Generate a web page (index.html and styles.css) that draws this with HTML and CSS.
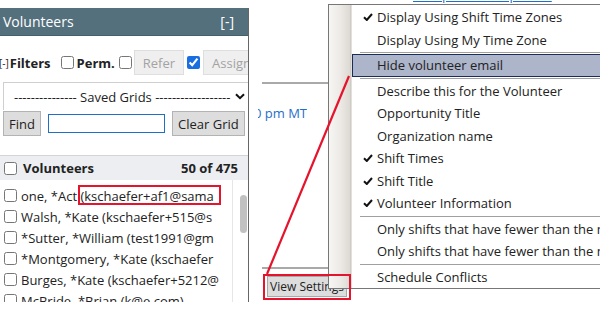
FILE: index.html
```html
<!DOCTYPE html>
<html lang="en">
<head>
  <meta charset="UTF-8">
  <title>Schedule - View Settings</title>
  <link rel="stylesheet" href="styles.css">
</head>
<body>
  <div class="page">
    <section class="panel">
      <div class="panel-head">
        <span>Volunteers</span>
        <span>[-]</span>
      </div>

      <div class="filters">
        <span class="toggle">[-]</span>Filters
        <input type="checkbox" class="check gap-l">
        <span class="perm">Perm.</span>
        <input type="checkbox" class="check">
        <button class="btn-off">Refer</button>
        <input type="checkbox" class="check" checked>
        <button class="btn-off assign">Assign</button>
      </div>

      <div class="saved-grids">
        <span>--------------- Saved Grids ------------------</span>
        <svg class="chevron" width="10" height="7" viewBox="0 0 10 7">
          <path d="M1 1.2 L5 5.2 L9 1.2" fill="none" stroke="#111" stroke-width="2"/>
        </svg>
      </div>

      <div class="find-row">
        <button class="btn">Find</button>
        <input type="text" class="find-input">
        <button class="btn clear">Clear Grid</button>
      </div>

      <div class="grid-head">
        <input type="checkbox" class="check">
        <span class="grid-title">Volunteers</span>
        <span class="grid-count">50 of 475</span>
      </div>

      <div class="grid-body">
        <div class="rows">
          <label class="row"><input type="checkbox" class="check">one, *Act (kschaefer+af1@sama</label>
          <label class="row"><input type="checkbox" class="check">Walsh, *Kate (kschaefer+515@s</label>
          <label class="row"><input type="checkbox" class="check">*Sutter, *William (test1991@gm</label>
          <label class="row"><input type="checkbox" class="check">*Montgomery, *Kate (kschaefer</label>
          <label class="row"><input type="checkbox" class="check">Burges, *Kate (kschaefer+5212@</label>
          <label class="row"><input type="checkbox" class="check">McBride, *Brian (k@e.com)</label>
        </div>
        <div class="scroll">
          <div class="thumb"></div>
        </div>
      </div>
    </section>

    <section class="schedule">
      <a class="shift-link">1:00 pm - 11:00 pm MT</a>
      <div class="rule"></div>
      <div class="time"><span>0 pm MT</span></div>
      <div class="rule rule-low"></div>
      <button class="btn view-btn">View Settings</button>
    </section>
  </div>

  <!-- view settings dropdown -->
  <div class="menu">
    <div class="menu-item"><span class="menu-icon"><svg width="10" height="8" viewBox="0 0 10 8"><path d="M1 4.2 L3.8 7 L9 1" fill="none" stroke="#111" stroke-width="2"/></svg></span>Display Using Shift Time Zones</div>
    <div class="menu-item"><span class="menu-icon"></span>Display Using My Time Zone</div>
    <div class="menu-sep"></div>
    <div class="menu-item active"><span class="menu-icon"></span>Hide volunteer email</div>
    <div class="menu-sep"></div>
    <div class="menu-item"><span class="menu-icon"></span>Describe this for the Volunteer</div>
    <div class="menu-item"><span class="menu-icon"></span>Opportunity Title</div>
    <div class="menu-item"><span class="menu-icon"></span>Organization name</div>
    <div class="menu-item"><span class="menu-icon"><svg width="10" height="8" viewBox="0 0 10 8"><path d="M1 4.2 L3.8 7 L9 1" fill="none" stroke="#111" stroke-width="2"/></svg></span>Shift Times</div>
    <div class="menu-item"><span class="menu-icon"><svg width="10" height="8" viewBox="0 0 10 8"><path d="M1 4.2 L3.8 7 L9 1" fill="none" stroke="#111" stroke-width="2"/></svg></span>Shift Title</div>
    <div class="menu-item"><span class="menu-icon"><svg width="10" height="8" viewBox="0 0 10 8"><path d="M1 4.2 L3.8 7 L9 1" fill="none" stroke="#111" stroke-width="2"/></svg></span>Volunteer Information</div>
    <div class="menu-sep"></div>
    <div class="menu-item"><span class="menu-icon"></span>Only shifts that have fewer than the minimum number of volunteers</div>
    <div class="menu-item"><span class="menu-icon"></span>Only shifts that have fewer than the maximum number of volunteers</div>
    <div class="menu-sep"></div>
    <div class="menu-item"><span class="menu-icon"></span>Schedule Conflicts</div>
  </div>

  <!-- red callouts drawn on top of the screenshot -->
  <svg class="callouts" width="600" height="310" viewBox="0 0 600 310">
    <rect x="79" y="186" width="141" height="18" fill="none" stroke="#e5132c" stroke-width="2"/>
    <line x1="349" y1="76" x2="267" y2="274" stroke="#e5132c" stroke-width="2.2"/>
    <rect x="264" y="275" width="86" height="24" fill="none" stroke="#e5132c" stroke-width="2"/>
  </svg>
</body>
</html>
```

FILE: styles.css
```css
* {
  box-sizing: border-box;
}

body {
  margin: 0;
  width: 600px;
  height: 310px;
  overflow: hidden;
  position: relative;
  background: #fff;
  color: #222;
  font-family: "Open Sans", "Noto Sans", sans-serif;
}

.page {
  display: flex;
  height: 310px;
}

/* left volunteers panel */
.panel {
  width: 249px;
  height: 294px;
  margin-top: 8px;
  flex: none;
  display: flex;
  flex-direction: column;
  border-right: 1px solid #666;
  overflow: hidden;
}

.panel-head {
  height: 28px;
  flex: none;
  display: flex;
  align-items: center;
  justify-content: space-between;
  padding: 0 14px 0 3px;
  background: #54707d;
  border-bottom: 1px solid #44606c;
  color: #fff;
  font-size: 14px;
}

.filters {
  display: flex;
  align-items: center;
  height: 25px;
  margin: 14px 0 0 -1px;
  font-size: 13px;
  font-weight: 700;
  white-space: nowrap;
}

.toggle {
  font-size: 10px;
  font-weight: 400;
  margin-right: 1px;
}

.check {
  width: 13px;
  height: 13px;
  margin: 0;
  flex: none;
  accent-color: #1a6fe0;
}

.gap-l {
  margin-left: 10px;
}

.perm {
  margin: 0 4px 0 3px;
}

.btn-off {
  height: 25px;
  margin: 0 3px 0 2px;
  padding: 0 8px;
  background: #efefef;
  border: 1px solid #dedede;
  color: #a3a3a3;
  font-family: inherit;
  font-size: 13px;
  flex: none;
}

.btn-off.assign {
  margin-left: 3px;
}

.saved-grids {
  height: 28px;
  margin: 7px 0 0 3px;
  display: flex;
  align-items: center;
  justify-content: space-between;
  padding: 0 3px 0 10px;
  border-top: 1px solid #cfcfcf;
  border-left: 1px solid #cfcfcf;
  font-size: 13px;
  white-space: nowrap;
}

.chevron {
  flex: none;
}

.find-row {
  display: flex;
  align-items: center;
  height: 25px;
  margin: 1px 0 0 3px;
}

.btn {
  height: 25px;
  padding: 0 5px;
  background: #dddddd;
  border: 1px solid #b3b3b3;
  color: #222;
  font-family: inherit;
  font-size: 13px;
}

.find-input {
  width: 117px;
  height: 19px;
  margin: 0 7px;
  border: 1px solid #1f6fc4;
  outline: none;
}

.clear {
  width: 73px;
}

.grid-head {
  height: 25px;
  flex: none;
  margin-top: 19px;
  display: flex;
  align-items: center;
  padding: 0 10px 0 4px;
  background: #eceef1;
  border-top: 1px solid #d4d4d4;
  font-size: 13px;
  font-weight: 700;
}

.grid-title {
  margin-left: 6px;
  flex: 1;
}

.grid-body {
  flex: 1;
  display: flex;
  min-height: 0;
}

.rows {
  width: 220px;
  padding-top: 5px;
  overflow: hidden;
}

.row {
  height: 21px;
  display: flex;
  align-items: center;
  padding-left: 4px;
  font-size: 13px;
  white-space: nowrap;
}

.row .check {
  margin-right: 4px;
}

.scroll {
  width: 16px;
  margin-left: 12px;
  padding: 15px 1px 0 7px;
  border-left: 1px solid #e6e6e6;
}

.thumb {
  height: 38px;
  border-radius: 4px;
  background: #c1c1c1;
}

/* schedule area behind the menu */
.schedule {
  flex: 1;
  display: flex;
  flex-direction: column;
  align-items: flex-start;
  padding-left: 13px;
  overflow: hidden;
}

.shift-link {
  margin: -14px 0 0 151px;
  line-height: 18px;
  font-size: 13px;
  color: #1f6fc8;
  text-decoration: underline;
  white-space: nowrap;
}

.rule {
  align-self: stretch;
  height: 2px;
  margin-top: 78px;
  background: #a9a9a9;
}

.time {
  margin: 20px 0 0 -4px;
  line-height: 18px;
  font-size: 13px;
  color: #1f6fc8;
  overflow: hidden;
  white-space: nowrap;
}

.time span {
  display: inline-block;
  margin-left: -4px;
}

.rule-low {
  margin-top: 145px;
}

.view-btn {
  width: 80px;
  height: 21px;
  margin: 7px 0 0 5px;
  padding: 0;
  font-size: 12px;
  border-color: #a9a9a9;
  white-space: nowrap;
}

/* dropdown menu */
.menu {
  position: absolute;
  top: 4px;
  left: 328px;
  width: 290px;
  padding-top: 1px;
  background: linear-gradient(to right, #f7f6f4 0, #ece9e5 12px, #dcd8d2 21px, #c4bfb8 22px, #fff 23px);
  border: 1px solid #777;
  border-right: 0;
  font-size: 13px;
  color: #222;
}

.menu-item {
  height: 22.5px;
  display: flex;
  align-items: center;
  white-space: nowrap;
}

.menu-icon {
  width: 48px;
  flex: none;
  display: flex;
  justify-content: flex-end;
  padding-right: 4px;
}

.menu-item.active {
  margin-left: 23px;
  background: #adb5ca;
  border: 1px solid #1d2b58;
  border-right: 0;
}

.menu-item.active .menu-icon {
  width: 24px;
}

.menu-sep {
  height: 1px;
  margin: 1px 0 1px 31px;
  background: #a0a0a0;
}

.callouts {
  position: absolute;
  top: 0;
  left: 0;
  pointer-events: none;
}
```
